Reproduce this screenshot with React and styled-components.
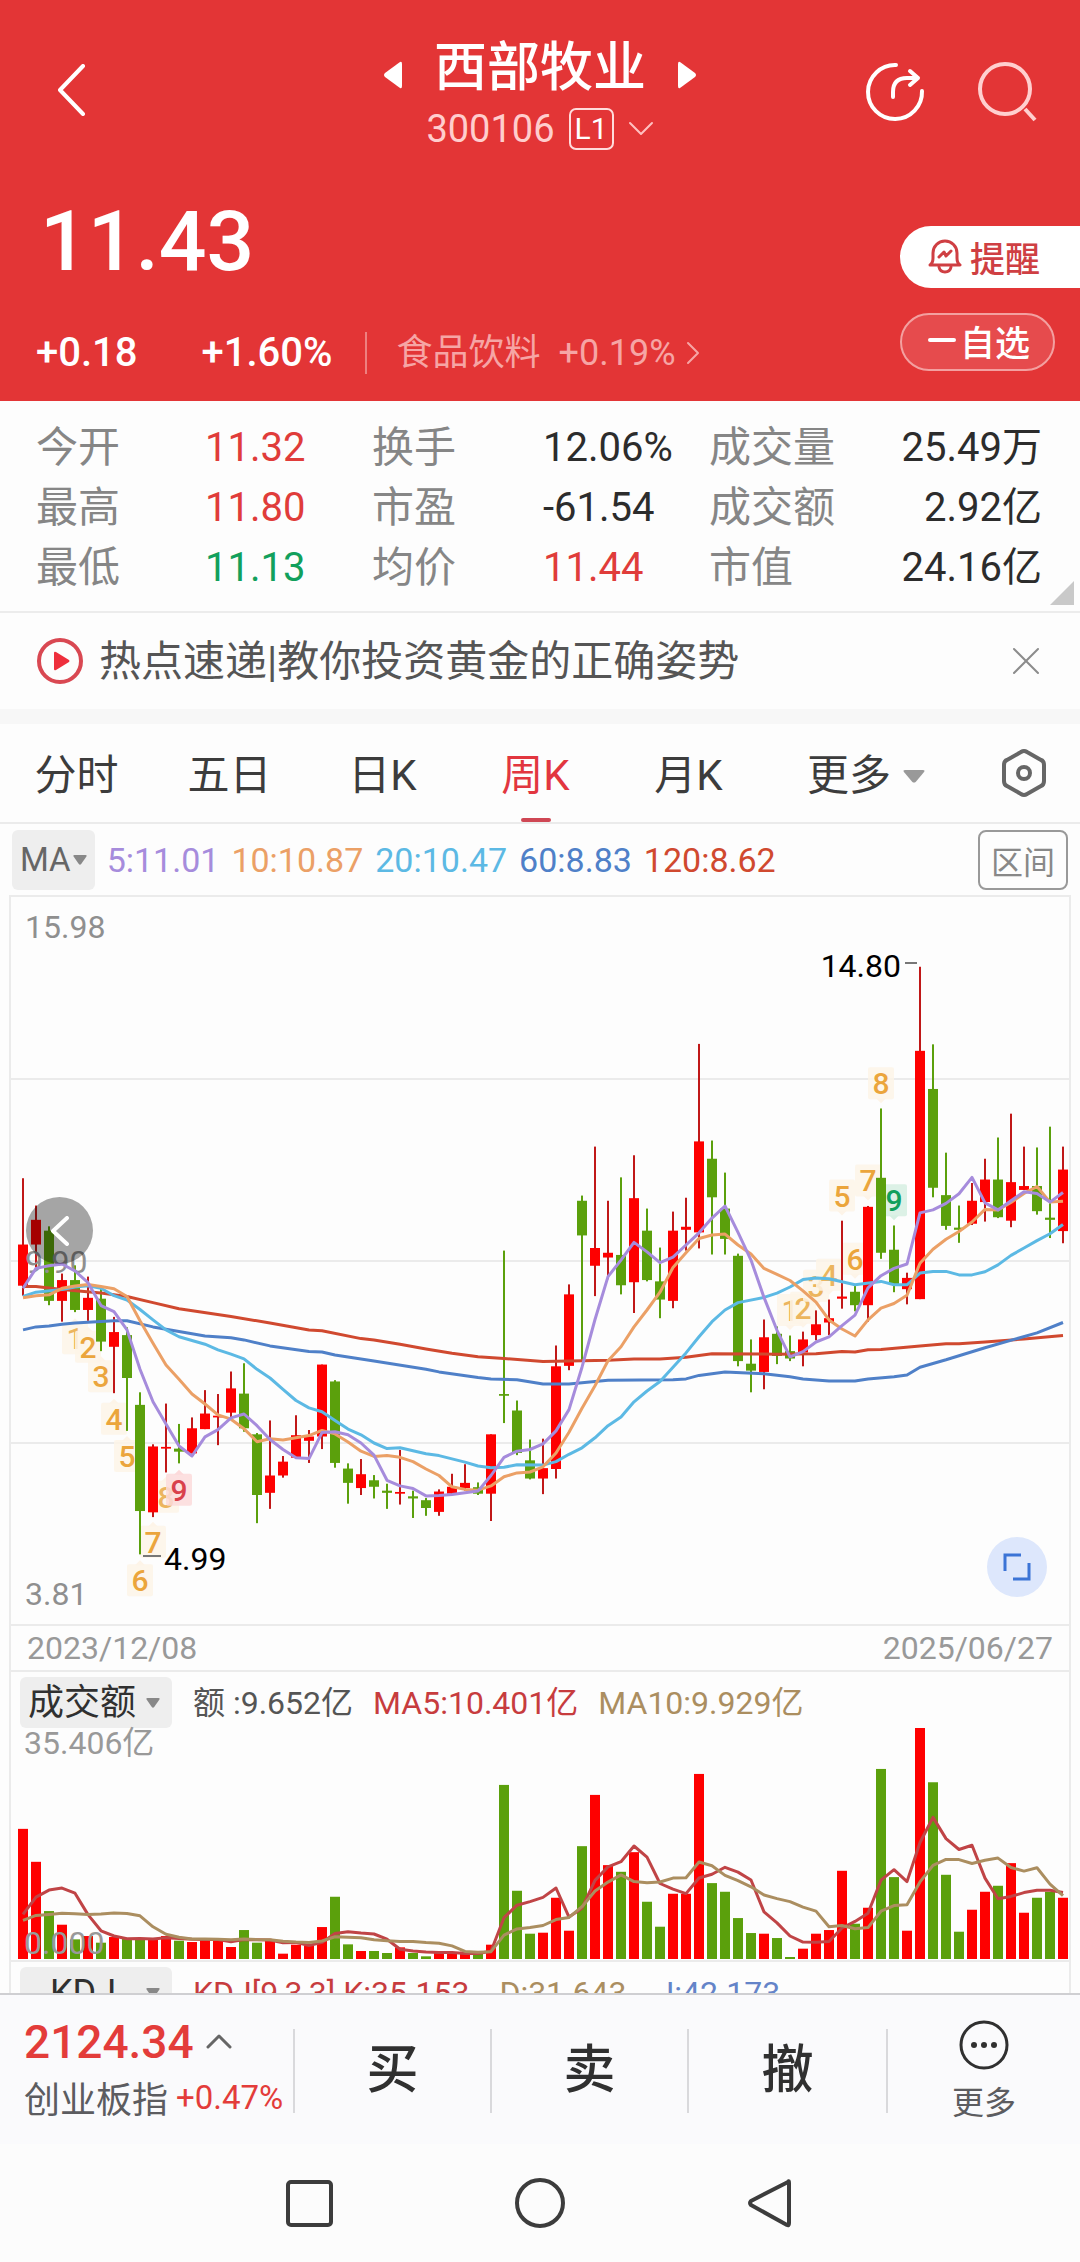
import React from 'react';
import styled, { createGlobalStyle } from 'styled-components';

const GlobalStyle = createGlobalStyle`
  * {
    box-sizing: border-box;
  }
  body {
    margin: 0;
    background: #fdfdfd;
    font-family: Roboto, 'Noto Sans CJK SC', sans-serif;
    color: #333;
  }
  button {
    margin: 0;
    padding: 0;
    border: 0;
    background: none;
    font: inherit;
    color: inherit;
    cursor: pointer;
  }
  svg {
    display: block;
    flex: none;
  }
`;

const RED = '#e03c3a';
const GREEN = '#12a05c';
const UP = '#fe0000';
const DOWN = '#5ba00c';

const Page = styled.div`
  display: flex;
  flex-direction: column;
  height: 100vh;
`;

const Scroll = styled.main`
  flex: 1;
  min-height: 0;
  overflow: hidden;
`;

/* ---------- header ---------- */

const Header = styled.header`
  padding-bottom: 18px;
  background: #e33536;
  color: #fff;
`;

const TopBar = styled.div`
  display: grid;
  grid-template-columns: 1fr auto 1fr;
  align-items: center;
  padding: 28px 43px 0;
`;

const BackButton = styled.button`
  padding-left: 14px;
`;

const TopActions = styled.div`
  display: flex;
  justify-content: flex-end;
  gap: 52px;
`;

const TitleBlock = styled.div`
  display: flex;
  flex-direction: column;
  align-items: center;
  padding-top: 6px;
`;

const TitleRow = styled.div`
  display: flex;
  align-items: center;
  gap: 31px;
`;

const StepButton = styled.button`
  padding-top: 14px;
`;

const StockName = styled.h1`
  margin: 0;
  font-size: 53px;
  font-weight: 500;
  line-height: 68px;
`;

const CodeRow = styled.div`
  display: flex;
  align-items: center;
  gap: 14px;
  font-size: 38px;
  line-height: 54px;
  color: #ffcdcd;
`;

const Level = styled.span`
  padding: 0 4px;
  border: 2px solid #ffdcdc;
  border-radius: 7px;
  font-size: 30px;
  line-height: 38px;
  color: #fff;
`;

const PriceArea = styled.div`
  display: flex;
  justify-content: space-between;
  padding-top: 36px;
`;

const Price = styled.div`
  padding-left: 40px;
  font-size: 84px;
  font-weight: 500;
  line-height: 100px;
`;

const ChangeRow = styled.div`
  display: flex;
  align-items: center;
  padding: 31px 0 0 36px;
  font-size: 40px;
  font-weight: 500;
  line-height: 60px;
`;

const ChangePct = styled.span`
  margin: 0 32px 0 64px;
`;

const Industry = styled.button`
  display: flex;
  align-items: center;
  padding-left: 30px;
  border-left: 2px solid #ee8080;
  font-size: 36px;
  font-weight: 400;
  line-height: 42px;
  color: #f6a5a5;
  white-space: pre;

  span {
    margin: 0 10px 0 18px;
  }
`;

const SideActions = styled.div`
  display: flex;
  flex-direction: column;
  width: 180px;
  padding-top: 34px;
`;

const Remind = styled.button`
  display: flex;
  align-items: center;
  gap: 8px;
  height: 62px;
  padding: 0 0 2px 28px;
  border-radius: 31px 0 0 31px;
  background: #fff;
  font-size: 35px;
  font-weight: 500;
  color: #cf3f43;
`;

const Watch = styled.button`
  display: flex;
  align-items: center;
  gap: 4px;
  height: 58px;
  margin: 25px 25px 0 0;
  padding: 0 0 4px 26px;
  border: 2px solid #f3a0a0;
  border-radius: 29px;
  background: #e64b4d;
  font-size: 35px;
  font-weight: 500;
`;

/* ---------- quote figures ---------- */

const Quotes = styled.dl`
  position: relative;
  display: grid;
  grid-template-columns: 169fr 167fr 171fr 166fr 169fr 164fr;
  margin: 0;
  padding: 17px 38px 13px 36px;
  border-bottom: 2px solid #ececec;
  font-size: 40px;
  line-height: 60px;
  white-space: nowrap;

  dt {
    font-size: 42px;
    color: #868686;
  }
  dd:nth-of-type(3n) {
    text-align: right;
  }
`;

const Value = styled.dd`
  margin: 0;
  color: ${(p) => p.$color || '#2c2c2c'};
`;

const Corner = styled.svg`
  position: absolute;
  right: 6px;
  bottom: 6px;
`;

const News = styled.div`
  display: flex;
  align-items: center;
  gap: 15px;
  height: 96px;
  padding: 0 40px 0 36px;
`;

const NewsLink = styled.a`
  flex: 1;
  padding-top: 2px;
  font-size: 42px;
  line-height: 60px;
  color: #555;
  text-decoration: none;
`;

const Band = styled.div`
  height: 15px;
  background: #f7f7f7;
`;

/* ---------- period tabs ---------- */

const Tabs = styled.nav`
  display: grid;
  grid-template-columns: repeat(5, 153fr) 202fr 113fr;
  height: 100px;
  border-bottom: 2px solid #ebebeb;
`;

const Tab = styled.button`
  display: flex;
  flex-direction: column;
  align-items: center;
  justify-content: space-between;
  padding-top: 22px;
  font-size: 42px;
  line-height: 60px;
  color: ${(p) => (p.$active ? '#e2363f' : '#3c3c3c')};

  &::after {
    content: '';
    width: 30px;
    height: 4px;
    border-radius: 2px;
    background: ${(p) => (p.$active ? '#cf4754' : 'transparent')};
  }
`;

const TabLabel = styled.span`
  display: flex;
  align-items: center;
  gap: 12px;
`;

const IconTab = styled.button`
  display: flex;
  align-items: center;
  justify-content: center;
`;

/* ---------- charts ---------- */

const Legend = styled.div`
  display: flex;
  align-items: center;
  gap: 12px;
  height: 71px;
  padding: 0 12px;
  font-size: 34px;
`;

const LegendText = styled.span`
  color: ${(p) => p.$color};
  white-space: pre;
`;

const MaButton = styled.button`
  display: flex;
  align-items: center;
  gap: 2px;
  height: 60px;
  padding: 0 8px;
  border-radius: 6px;
  background: #eee;
  font-size: 33px;
  color: #666;
`;

const RangeButton = styled.button`
  height: 60px;
  margin-left: auto;
  padding: 0 11px;
  border: 2px solid #999;
  border-radius: 8px;
  font-size: 32px;
  color: #888;
`;

const Panel = styled.section`
  margin: 0 9px;
  border: 2px solid #ebebeb;
  border-bottom: 0;
`;

const PriceBox = styled.div`
  position: relative;
`;

const ChartSvg = styled.svg`
  width: 100%;
  height: auto;
  overflow: visible;
`;

const RoundButton = styled.button`
  position: absolute;
  display: flex;
  align-items: center;
  justify-content: center;
  border-radius: 50%;
`;

const ScrollBack = styled(RoundButton)`
  left: 15px;
  top: 300px;
  width: 67px;
  height: 67px;
  background: rgba(0, 0, 0, 0.35);
`;

const Expand = styled(RoundButton)`
  right: 22px;
  bottom: 27px;
  width: 60px;
  height: 60px;
  background: #dde7fc;
`;

const Dates = styled.div`
  display: flex;
  justify-content: space-between;
  height: 48px;
  padding: 0 16px;
  border: solid #ebebeb;
  border-width: 2px 0;
  font-size: 32px;
  line-height: 44px;
  color: #999;
`;

const IndicatorHead = styled.div`
  display: flex;
  align-items: center;
  gap: ${(p) => p.$gap}px;
  padding: 5px 9px 0;
  font-size: 32px;
  line-height: 50px;
  white-space: pre;
`;

const IndicatorButton = styled.button`
  display: flex;
  align-items: center;
  justify-content: space-between;
  width: 152px;
  height: 51px;
  margin-right: ${(p) => 21 - p.$gap}px;
  padding: 0 12px 0 ${(p) => p.$indent}px;
  border-radius: 6px;
  background: #eee;
  font-size: 36px;
  color: #303030;
`;

const VolumeBox = styled.div`
  border-bottom: 2px solid #ebebeb;
`;

/* ---------- bottom bars ---------- */

const TradeBar = styled.footer`
  display: grid;
  grid-template-columns: 293fr 197fr 197fr 199fr 194fr;
  grid-template-rows: minmax(0, 1fr);
  height: 151px;
  padding: 34px 0 31px;
  border-top: 2px solid #cfcfd2;
  background: #fafafc;
`;

const IndexButton = styled.button`
  padding-left: 24px;
  text-align: left;
  white-space: nowrap;
  font-size: 36px;
  color: #5c5c60;
`;

const IndexLine = styled.span`
  display: flex;
  align-items: center;
  gap: ${(p) => p.$gap}px;
  height: ${(p) => p.$height}px;
  margin-top: ${(p) => p.$top || 0}px;
`;

const IndexFigure = styled.strong`
  font-size: ${(p) => p.$size}px;
  font-weight: ${(p) => p.$weight};
  color: #e33c3a;
`;

const TradeButton = styled.button`
  border-left: 2px solid #d9d9dc;
  font-size: 52px;
  font-weight: 500;
  line-height: 60px;
  color: #303030;
`;

const MoreButton = styled(TradeButton)`
  display: flex;
  flex-direction: column;
  align-items: center;
  justify-content: center;
  gap: 12px;
  font-size: 32px;
  font-weight: 400;
  line-height: 40px;
  color: #5c5c60;
`;

const SystemBar = styled.nav`
  display: flex;
  align-items: center;
  justify-content: center;
  gap: 181px;
  height: 118px;
  background: #fcfcfc;
`;

/* ---------- data ---------- */

const quotes = [
  ['今开', '11.32', RED], ['换手', '12.06%'], ['成交量', '25.49万'],
  ['最高', '11.80', RED], ['市盈', '-61.54'], ['成交额', '2.92亿'],
  ['最低', '11.13', GREEN], ['均价', '11.44', RED], ['市值', '24.16亿'],
];

const periods = ['分时', '五日', '日K', '周K', '月K'];

const averages = [
  ['5:11.01', '#a68cdc'],
  ['10:10.87', '#eba066'],
  ['20:10.47', '#5cb9e4'],
  ['60:8.83', '#4f80c8'],
  ['120:8.62', '#d0492f'],
];

// each week: up or down, then high, body top, body bottom, low in chart levels
const candles = [
  [1, 549, 702, 797, 820], [1, 612, 645, 702, 755], [0, 660, 670, 832, 842],
  [1, 769, 784, 832, 880], [0, 750, 784, 853, 858], [1, 776, 825, 853, 878],
  [0, 803, 827, 926, 948], [1, 869, 904, 938, 1045], [0, 893, 911, 1010, 1132],
  [0, 1043, 1072, 1317, 1417], [1, 1163, 1168, 1320, 1331], [1, 1069, 1169, 1173, 1228],
  [0, 1116, 1173, 1180, 1207], [1, 1101, 1126, 1184, 1184], [1, 1038, 1092, 1128, 1128],
  [1, 1047, 1097, 1101, 1165], [1, 995, 1034, 1090, 1105], [0, 976, 1046, 1126, 1134],
  [0, 1137, 1140, 1280, 1345], [1, 1108, 1235, 1275, 1312], [1, 1190, 1203, 1235, 1240],
  [1, 1096, 1142, 1194, 1196], [1, 1130, 1145, 1155, 1206], [1, 979, 979, 1145, 1174],
  [0, 1015, 1018, 1206, 1217], [0, 1207, 1219, 1252, 1300], [1, 1197, 1232, 1264, 1280],
  [0, 1234, 1246, 1261, 1288], [0, 1254, 1270, 1275, 1312], [1, 1176, 1273, 1277, 1302],
  [0, 1270, 1283, 1288, 1333], [0, 1287, 1292, 1310, 1328], [1, 1267, 1272, 1319, 1328],
  [1, 1231, 1261, 1277, 1277], [1, 1209, 1252, 1264, 1270], [0, 1251, 1262, 1277, 1280],
  [1, 1140, 1140, 1277, 1340], [0, 716, 1047, 1051, 1114], [0, 1062, 1085, 1183, 1188],
  [0, 1152, 1200, 1242, 1244], [1, 1150, 1218, 1242, 1278], [1, 935, 983, 1220, 1242],
  [1, 794, 817, 982, 992], [0, 589, 601, 681, 968], [1, 476, 710, 751, 821],
  [1, 601, 721, 732, 782], [0, 547, 726, 796, 817], [1, 496, 595, 789, 860],
  [0, 619, 670, 784, 787], [0, 709, 787, 829, 872], [1, 626, 670, 832, 849],
  [1, 594, 661, 668, 716], [1, 239, 464, 674, 711], [0, 462, 504, 593, 725],
  [0, 536, 619, 689, 725], [0, 723, 728, 971, 983], [0, 921, 977, 993, 1043],
  [1, 875, 916, 996, 1036], [0, 891, 908, 959, 978], [0, 912, 948, 965, 971],
  [1, 903, 921, 951, 983], [1, 854, 886, 911, 923], [1, 829, 872, 882, 911],
  [1, 647, 822, 827, 850], [0, 797, 811, 842, 856], [1, 613, 615, 842, 880],
  [0, 388, 548, 721, 735], [0, 658, 714, 793, 812], [1, 767, 779, 805, 840],
  [1, 61, 255, 828, 828], [0, 240, 343, 571, 593], [0, 490, 588, 659, 668],
  [0, 612, 663, 668, 698], [1, 560, 601, 654, 657], [1, 504, 552, 604, 649],
  [0, 455, 552, 639, 641], [1, 400, 558, 647, 662], [1, 476, 567, 576, 576],
  [0, 478, 567, 625, 633], [0, 430, 640, 645, 687], [1, 476, 529, 671, 699],
];

// moving averages as [week, level] knots
const ma120 = [
  [0, 799], [1, 799], [3, 806], [6, 814], [8, 822], [10, 836], [12, 850], [16, 868], [19, 883],
  [22, 899], [23, 901], [26, 919], [27, 922], [29, 932], [31, 943], [33, 953], [35, 961],
  [37, 965], [40, 972], [42, 971], [45, 969], [47, 966], [49, 966], [51, 962], [53, 954],
  [58, 955], [61, 954], [63, 949], [64, 950], [65, 945], [66, 944], [69, 936], [71, 931],
  [72, 931], [74, 927], [77, 920], [80, 912],
];
const ma60 = [
  [0, 899], [1, 892], [2, 890], [3, 886], [4, 883], [7, 878], [8, 878], [10, 892], [13, 908],
  [14, 913], [16, 917], [17, 922], [19, 936], [22, 949], [23, 950], [24, 957], [27, 971],
  [31, 990], [32, 996], [35, 1009], [36, 1012], [38, 1014], [40, 1024], [42, 1024], [45, 1015],
  [50, 1014], [51, 1012], [52, 1004], [54, 996], [57, 1000], [59, 1007], [60, 1012], [62, 1017],
  [64, 1017], [65, 1012], [67, 1007], [68, 1003], [69, 985], [71, 968], [74, 940], [78, 906],
  [80, 882],
];
const ma20 = [
  [0, 822], [1, 812], [3, 806], [4, 800], [5, 797], [6, 803], [7, 820], [8, 830], [9, 852],
  [10, 876], [11, 899], [12, 915], [14, 932], [15, 945], [16, 955], [17, 966], [18, 990],
  [19, 1010], [20, 1036], [21, 1062], [22, 1079], [23, 1088], [24, 1108], [25, 1128],
  [26, 1141], [27, 1160], [28, 1173], [29, 1171], [31, 1185], [32, 1189], [34, 1204],
  [35, 1213], [36, 1217], [37, 1216], [38, 1210], [40, 1211], [41, 1203], [42, 1186],
  [43, 1171], [44, 1148], [45, 1120], [46, 1100], [47, 1065], [48, 1040], [49, 1018],
  [50, 985], [51, 952], [52, 915], [53, 880], [54, 853], [55, 836], [57, 824], [58, 814],
  [59, 800], [60, 783], [61, 779], [62, 781], [63, 788], [64, 795], [66, 787], [67, 795],
  [68, 795], [69, 768], [70, 764], [71, 764], [72, 772], [73, 772], [74, 765], [75, 749],
  [76, 727], [77, 710], [78, 693], [79, 677], [80, 656],
];
const ma10 = [
  825, 820, 818, 803, 798, 794, 799, 804, 822, 878, 930, 980, 1013, 1047, 1070, 1095, 1105, 1127,
  1157, 1150, 1153, 1148, 1143, 1131, 1139, 1158, 1179, 1191, 1189, 1193, 1203, 1220, 1235, 1261,
  1267, 1269, 1259, 1238, 1229, 1227, 1215, 1183, 1135, 1080, 1028, 970, 938, 892, 853, 812, 755,
  721, 688, 680, 678, 703, 724, 757, 771, 785, 809, 835, 876, 897, 913, 876, 849, 838, 819, 745,
  713, 690, 672, 650, 621, 622, 605, 584, 568, 604, 602,
].map((v, i) => [i, v]);
const ma5 = [
  803, 757, 751, 747, 763, 790, 843, 857, 899, 990, 1065, 1116, 1167, 1190, 1146, 1129, 1102,
  1093, 1120, 1152, 1175, 1194, 1196, 1136, 1134, 1141, 1160, 1188, 1246, 1259, 1265, 1282, 1281,
  1279, 1275, 1271, 1235, 1193, 1179, 1175, 1162, 1132, 1083, 985, 875, 776, 738, 697, 719, 744,
  731, 703, 675, 641, 613, 674, 738, 824, 900, 961, 949, 927, 915, 889, 865, 802, 774, 757, 747,
  629, 622, 607, 585, 547, 606, 622, 601, 580, 584, 604, 582,
].map((v, i) => [i, v]);

// nine-turn counts: week, level of the digit, digit, side of the candle
const turns = [
  [4, 918, 1, 'below', 'faint'], [5, 938, 2, 'below'], [6, 1006, 3, 'below'],
  [7, 1104, 4, 'below'], [8, 1190, 5, 'below'], [9, 1477, 6, 'below'],
  [10, 1388, 7, 'below'], [11, 1284, 8, 'below', 'faint'], [12, 1268, 9, 'below', 'buy'],
  [59, 853, 1, 'above', 'faint'], [60, 848, 2, 'above', 'faint'], [61, 797, 3, 'above', 'faint'],
  [62, 772, 4, 'above', 'faint'], [63, 589, 5, 'above'], [64, 735, 6, 'above'],
  [65, 554, 7, 'above'], [66, 330, 8, 'above'], [67, 600, 9, 'above', 'sell'],
];

const turnColors = {
  plain: ['#fdf4e8', '#eba53c'],
  faint: ['#fdf4e8', '#ecb55e'],
  buy: ['#fcdadb', '#d9414b'],
  sell: ['#d6efe2', '#12a05c'],
};

// weekly turnover; the first nine are from before the visible range
const turnover = [
  142, 114, 71, 71, 92, 32, 39, 73, 135,
  391, 292, 144, 103, 59, 69, 49, 66, 62, 62, 60, 69, 55, 51, 59, 59, 36, 87, 49, 55, 16, 43, 40,
  96, 187, 44, 24, 24, 18, 35, 18, 8, 18, 18, 22, 15, 43, 523, 205, 76, 79, 184, 85, 339, 493,
  282, 262, 321, 172, 97, 196, 196, 556, 228, 202, 123, 78, 76, 63, 6, 31, 76, 87, 265, 106, 154,
  571, 246, 85, 694, 531, 253, 82, 148, 202, 220, 288, 139, 184, 202, 184,
];
const HISTORY = 9;
const turnoverMax = Math.max(...turnover);

/* ---------- chart geometry ---------- */

const WIDTH = 1058;
const PRICE_HEIGHT = 727;
const VOLUME_HEIGHT = 232;
const STEP = 13;

const xAt = (week) => 12 + week * STEP;
const yAt = (level) => ((level + 100) / 1680) * 728;
const points = (knots) => knots.map(([i, v]) => `${xAt(i)},${yAt(v).toFixed(1)}`).join(' ');

const volumeY = (v) => VOLUME_HEIGHT - 1 - (v / turnoverMax) * 231;
const volumeAverage = (days) =>
  candles
    .map((_, i) => {
      const end = i + HISTORY + 1;
      const slice = turnover.slice(end - days, end);
      const mean = slice.reduce((a, b) => a + b, 0) / days;
      return `${xAt(i)},${volumeY(mean).toFixed(1)}`;
    })
    .join(' ');

/* ---------- components ---------- */

const Caret = ({ width = 14, height = 10, color = '#888' }) => (
  <svg width={width} height={height} viewBox="0 0 14 10" preserveAspectRatio="none" aria-hidden="true">
    <path d="M1.5 0h11q1.8 0 .9 1.5L8.2 9Q7 10.4 5.8 9L.6 1.5Q-.3 0 1.5 0z" fill={color} />
  </svg>
);

const Chevron = ({ d, width, height, stroke = '#fff', strokeWidth = 3 }) => (
  <svg width={width} height={height} fill="none" stroke={stroke} strokeWidth={strokeWidth} strokeLinecap="round" strokeLinejoin="round" aria-hidden="true">
    <path d={d} />
  </svg>
);

const StockHeader = () => (
  <Header>
    <TopBar>
      <div>
        <BackButton aria-label="返回">
          <Chevron d="M26 2L3 26L26 50" width={30} height={52} strokeWidth={4} />
        </BackButton>
      </div>
      <TitleBlock>
        <TitleRow>
          <StepButton aria-label="上一只">
            <svg width="20" height="28" fill="#fff"><path d="M17 1Q19 0 19 3V25Q19 28 17 27L2 16Q0 14 2 12z" /></svg>
          </StepButton>
          <StockName>西部牧业</StockName>
          <StepButton aria-label="下一只">
            <svg width="20" height="28" fill="#fff"><path d="M3 1Q1 0 1 3V25Q1 28 3 27L18 16Q20 14 18 12z" /></svg>
          </StepButton>
        </TitleRow>
        <CodeRow>
          300106
          <Level>L1</Level>
          <Chevron d="M2 2L13 13L24 2" width={26} height={16} stroke="#ffc0c0" strokeWidth={2} />
        </CodeRow>
      </TitleBlock>
      <TopActions>
        <button aria-label="分享">
          <svg width="60" height="60" fill="none" stroke="#fff" strokeWidth="4" strokeLinecap="round" strokeLinejoin="round">
            <path d="M31 3A27 27 0 1 0 57 29" />
            <path d="M28 35V30Q28 16 42 16H53M45 9L53 16L45 23" />
          </svg>
        </button>
        <button aria-label="搜索">
          <svg width="60" height="60" fill="none" stroke="#ffcfcf" strokeWidth="4">
            <circle cx="28" cy="27" r="25" />
            <path d="M48 47L58 58" />
          </svg>
        </button>
      </TopActions>
    </TopBar>
    <PriceArea>
      <div>
        <Price>11.43</Price>
        <ChangeRow>
          <span>+0.18</span>
          <ChangePct>+1.60%</ChangePct>
          <Industry>
            食品饮料
            <span>+0.19%</span>
            <Chevron d="M2 2L12 12L2 22" width={14} height={24} stroke="#f6a5a5" strokeWidth={2} />
          </Industry>
        </ChangeRow>
      </div>
      <SideActions>
        <Remind>
          <svg width="34" height="36" fill="none" stroke="#cf3f43" strokeWidth="3" strokeLinecap="round" strokeLinejoin="round">
            <path d="M2 27Q5 25 5 20V15A12 12 0 0 1 29 15V20Q29 25 32 27z" />
            <path d="M11 29Q12 34 17 34Q22 34 23 29" />
            <path d="M11 19L16 14L18 18L23 13" />
          </svg>
          提醒
        </Remind>
        <Watch>
          <svg width="28" height="4"><rect width="28" height="4" rx="2" fill="#fff" /></svg>
          自选
        </Watch>
      </SideActions>
    </PriceArea>
  </Header>
);

const QuoteTable = () => (
  <Quotes>
    {quotes.map(([label, value, color]) => (
      <React.Fragment key={label}>
        <dt>{label}</dt>
        <Value $color={color}>{value}</Value>
      </React.Fragment>
    ))}
    <Corner width="24" height="24" aria-hidden="true"><path d="M24 0V24H0z" fill="#c9c9c9" /></Corner>
  </Quotes>
);

const NewsBar = () => (
  <News>
    <svg width="48" height="48" aria-hidden="true">
      <circle cx="24" cy="24" r="21" fill="none" stroke="#d94852" strokeWidth="4" />
      <path d="M18 16Q18 14 20 15L33 23Q34 24 33 25L20 33Q18 34 18 32z" fill="#ee2f3c" />
    </svg>
    <NewsLink href="#news">热点速递|教你投资黄金的正确姿势</NewsLink>
    <button aria-label="关闭">
      <Chevron d="M2 2L26 26M26 2L2 26" width={28} height={28} stroke="#8c8c8c" strokeWidth={2} />
    </button>
  </News>
);

const PeriodTabs = () => (
  <Tabs>
    {periods.map((name) => (
      <Tab key={name} $active={name === '周K'}>{name}</Tab>
    ))}
    <Tab>
      <TabLabel>
        更多
        <Caret width={22} height={13} color="#999" />
      </TabLabel>
    </Tab>
    <IconTab aria-label="图表设置">
      <svg width="46" height="50" fill="none" stroke="#666" strokeWidth="4" strokeLinejoin="round">
        <path d="M20 4Q23 2 26 4L40 12Q43 13 43 17V33Q43 37 40 38L26 46Q23 48 20 46L6 38Q3 37 3 33V17Q3 13 6 12z" />
        <circle cx="23" cy="25" r="6" />
      </svg>
    </IconTab>
  </Tabs>
);

const Turn = ({ week, level, digit, side, tone = 'plain' }) => {
  const [fill, color] = turnColors[tone];
  const x = xAt(week);
  const y = yAt(level);
  const tip = side === 'below' ? `M${x - 5} ${y - 15}l5 -5l5 5z` : `M${x - 5} ${y + 15}l5 5l5 -5z`;
  return (
    <g>
      <rect x={x - 13} y={y - 16} width="26" height="32" rx="2" fill={fill} fillOpacity="0.85" />
      <path d={tip} fill={fill} />
      <text x={x} y={y + 11} textAnchor="middle" fontSize="30" fontWeight="500" fill={color}>{digit}</text>
    </g>
  );
};

const Candle = ({ week, data }) => {
  const [up, high, top, bottom, low] = data;
  const x = xAt(week);
  return (
    <g fill={up ? UP : DOWN}>
      <rect x={x - 1} y={yAt(high)} width="2" height={yAt(low) - yAt(high)} fill={up ? '#c01818' : DOWN} />
      <rect x={x - 5} y={yAt(top)} width="10" height={yAt(bottom) - yAt(top)} />
    </g>
  );
};

const PriceChart = () => (
  <PriceBox>
    <ChartSvg viewBox={`0 0 ${WIDTH} ${PRICE_HEIGHT}`} role="img" aria-label="周K线">
      {[320, 740, 1160].map((level) => (
        <rect key={level} x="0" y={yAt(level) - 1} width={WIDTH} height="2" fill="#ebebeb" />
      ))}
      {turns.map(([week, level, digit, side, tone]) => (
        <Turn key={week} week={week} level={level} digit={digit} side={side} tone={tone} />
      ))}
      {candles.map((data, i) => (
        <Candle key={i} week={i} data={data} />
      ))}
      <g fontSize="32" fill="#8f8f8f">
        <text x="14" y="41">15.98</text>
        <text x="14" y="376">9.90</text>
        <text x="14" y="708">3.81</text>
      </g>
      <g fill="none" strokeWidth="3" strokeLinejoin="round">
        <polyline points={points(ma120)} stroke="#d0492f" />
        <polyline points={points(ma60)} stroke="#4f80c8" />
        <polyline points={points(ma20)} stroke="#5cb9e4" />
        <polyline points={points(ma10)} stroke="#eba066" />
        <polyline points={points(ma5)} stroke="#a68cdc" />
      </g>
      <g fontSize="32" fill="#000">
        <text x="890" y="80" textAnchor="end">14.80</text>
        <text x="153" y="673">4.99</text>
      </g>
      <path d="M894 66H906M132 659H150" stroke="#777" strokeWidth="2" />
    </ChartSvg>
    <ScrollBack aria-label="更早">
      <Chevron d="M16 2L2 15L16 28" width={18} height={30} strokeWidth={4} />
    </ScrollBack>
    <Expand aria-label="全屏">
      <svg width="30" height="28" fill="none" stroke="#3b74d6" strokeWidth="3">
        <path d="M19 2H3V18M11 26H27V10" />
      </svg>
    </Expand>
  </PriceBox>
);

const VolumeChart = () => (
  <VolumeBox>
    <ChartSvg viewBox={`0 0 ${WIDTH} ${VOLUME_HEIGHT}`} role="img" aria-label="成交额">
      {candles.map(([up], i) => {
        const y = volumeY(turnover[i + HISTORY]);
        return <rect key={i} x={xAt(i) - 5} y={y} width="10" height={VOLUME_HEIGHT - 1 - y} fill={up ? UP : DOWN} />;
      })}
      <g fontSize="32" fill="#999">
        <text x="13" y="26">35.406亿</text>
        <text x="13" y="226">0.000</text>
      </g>
      <g fill="none" strokeWidth="3" strokeLinejoin="round">
        <polyline points={volumeAverage(5)} stroke="#c04446" />
        <polyline points={volumeAverage(10)} stroke="#ab8e60" />
      </g>
    </ChartSvg>
  </VolumeBox>
);

const BottomBar = () => (
  <TradeBar>
    <IndexButton>
      <IndexLine $gap={12} $height={26}>
        <IndexFigure $size={46} $weight={500}>2124.34</IndexFigure>
        <Chevron d="M2 13L13 2L24 13" width={26} height={16} stroke="#666" />
      </IndexLine>
      <IndexLine $gap={8} $height={32} $top={26}>
        创业板指
        <IndexFigure $size={33} $weight={400}>+0.47%</IndexFigure>
      </IndexLine>
    </IndexButton>
    <TradeButton>买</TradeButton>
    <TradeButton>卖</TradeButton>
    <TradeButton>撤</TradeButton>
    <MoreButton>
      <svg width="52" height="52" aria-hidden="true">
        <circle cx="26" cy="26" r="23" fill="none" stroke="#303030" strokeWidth="3" />
        <circle cx="16" cy="26" r="3" fill="#303030" />
        <circle cx="26" cy="26" r="3" fill="#303030" />
        <circle cx="36" cy="26" r="3" fill="#303030" />
      </svg>
      更多
    </MoreButton>
  </TradeBar>
);

const SystemNav = () => (
  <SystemBar>
    <button aria-label="最近任务">
      <svg width="50" height="50" fill="none" stroke="#3c3c3c" strokeWidth="4"><rect x="4" y="4" width="43" height="43" rx="3" /></svg>
    </button>
    <button aria-label="主屏幕">
      <svg width="50" height="50" fill="none" stroke="#3c3c3c" strokeWidth="4"><circle cx="25" cy="25" r="23" /></svg>
    </button>
    <button aria-label="返回">
      <svg width="50" height="50" fill="none" stroke="#3c3c3c" strokeWidth="4" strokeLinejoin="round"><path d="M42 4Q43 2 43 5V45Q43 48 41 47L5 27Q3 25 5 23z" /></svg>
    </button>
  </SystemBar>
);

const App = () => (
  <Page>
    <GlobalStyle />
    <StockHeader />
    <Scroll>
      <QuoteTable />
      <NewsBar />
      <Band />
      <PeriodTabs />
      <Legend>
        <MaButton aria-haspopup="menu">
          MA
          <Caret />
        </MaButton>
        {averages.map(([text, color]) => (
          <LegendText key={text} $color={color}>{text}</LegendText>
        ))}
        <RangeButton>区间</RangeButton>
      </Legend>
      <Panel>
        <PriceChart />
        <Dates>
          <span>2023/12/08</span>
          <span>2025/06/27</span>
        </Dates>
        <IndicatorHead $gap={20}>
          <IndicatorButton $gap={20} $indent={8} aria-haspopup="menu">
            成交额
            <Caret />
          </IndicatorButton>
          <LegendText $color="#555">额 :9.652亿</LegendText>
          <LegendText $color="#c73c3e">MA5:10.401亿</LegendText>
          <LegendText $color="#ab8e60">MA10:9.929亿</LegendText>
        </IndicatorHead>
        <VolumeChart />
        <IndicatorHead $gap={30}>
          <IndicatorButton $gap={30} $indent={30} aria-haspopup="menu">
            KDJ
            <Caret />
          </IndicatorButton>
          <LegendText $color="#c73c3e">KDJ[9,3,3] K:35.153</LegendText>
          <LegendText $color="#ab8e60">D:31.643</LegendText>
          <LegendText $color="#6484c8">J:42.173</LegendText>
        </IndicatorHead>
      </Panel>
    </Scroll>
    <BottomBar />
    <SystemNav />
  </Page>
);

export default App;
